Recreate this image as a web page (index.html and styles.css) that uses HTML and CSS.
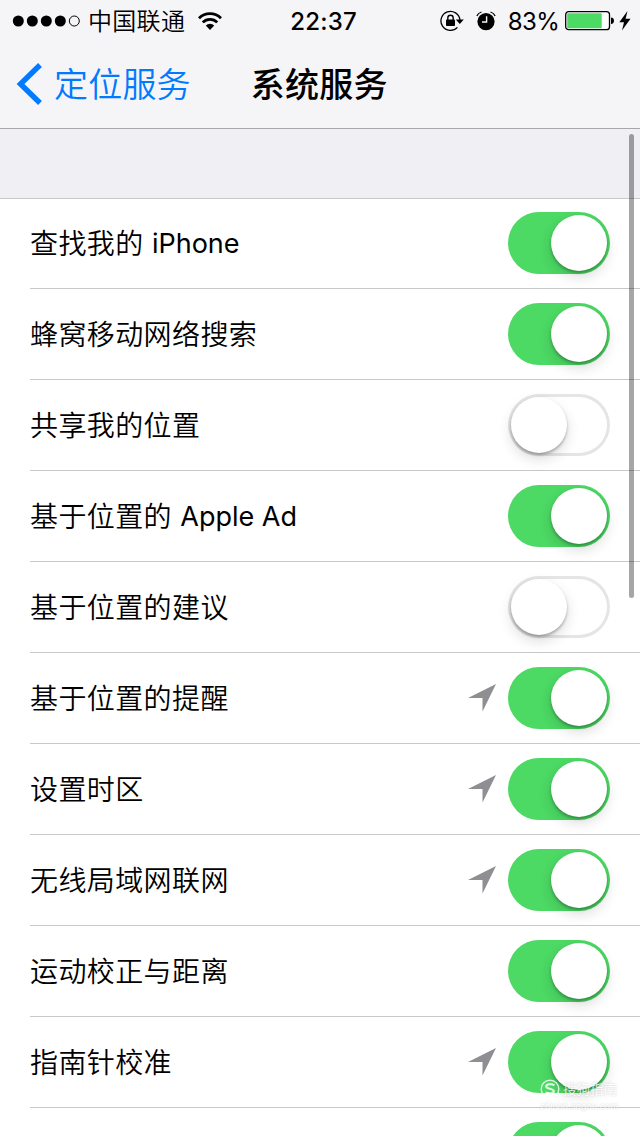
FILE: index.html
```html
<!DOCTYPE html>
<html lang="zh-CN">
<head>
  <meta charset="UTF-8" />
  <meta name="viewport" content="width=device-width, initial-scale=1" />
  <title>系统服务</title>
  <link rel="stylesheet" href="styles.css">
</head>
<body>
  <svg class="symbols" width="0" height="0">
    <symbol id="arrow" viewBox="0 0 28 28">
      <path d="M28 0 L14.5 27.5 V14 H0 Z" fill="#8e8e93" />
    </symbol>
  </svg>

  <header>
    <div class="status">
      <div class="status-left">
        <svg class="signal" width="70" height="14" viewBox="0 0 70 14">
          <circle cx="6.3" cy="7" r="5.5" /><circle cx="20.3" cy="7" r="5.5" />
          <circle cx="34.3" cy="7" r="5.5" /><circle cx="48.3" cy="7" r="5.5" />
          <circle cx="62.3" cy="7" r="5" fill="none" stroke="#000" />
        </svg>
        <span class="carrier">中国联通</span>
        <svg class="wifi" width="26" height="20" viewBox="0 0 26 20">
          <g fill="none" stroke="#000" stroke-width="2.8">
            <path d="M2 7.2 A15.5 15.5 0 0 1 24 7.2" />
            <path d="M5.8 11.4 A10 10 0 0 1 20.2 11.4" />
          </g>
          <path d="M8.8 14.5 A6 6 0 0 1 17.2 14.5 L13 19 Z" />
        </svg>
      </div>
      <span class="time">22:37</span>
      <div class="status-right">
        <svg class="lock" width="24" height="22" viewBox="0 0 24 22">
          <path d="M17.4 17.4 A9.5 9.5 0 1 1 19.9 10" fill="none" stroke="#000" stroke-width="1.3" />
          <path d="M15.8 9.6 H23.8 L19.8 14 Z" />
          <rect x="6" y="9.5" width="9" height="6.6" rx=".8" />
          <path d="M7.8 10 V8 A2.7 2.7 0 0 1 13.2 8 V10" fill="none" stroke="#000" stroke-width="1.4" />
        </svg>
        <svg class="alarm" width="20" height="20" viewBox="0 0 20 20">
          <circle cx="10" cy="10.6" r="8.6" />
          <path d="M.9 5.6 Q2 2.2 5.5 1.2 M14.5 1.2 Q18 2.2 19.1 5.6" fill="none" stroke="#f5f5f7" stroke-width="3" />
          <path d="M.9 5 Q2 2 5.5 1 M14.5 1 Q18 2 19.1 5" fill="none" stroke="#000" stroke-width="1.3" />
          <path d="M10.6 5.2 V11 H6" fill="none" stroke="#f5f5f7" stroke-width="1.4" />
        </svg>
        <span class="percent">83%</span>
        <svg class="battery" width="50" height="20" viewBox="0 0 50 20">
          <rect x=".7" y=".7" width="43.8" height="18" rx="3" fill="#fff" stroke="#000" stroke-width="1.3" />
          <rect x="2.2" y="2.2" width="34.5" height="15" rx="1" fill="#4cd964" />
          <path d="M46 6.4 Q49 6.6 49 9.7 T46 13 Z" />
        </svg>
        <svg class="bolt" width="12" height="20" viewBox="0 0 12 20">
          <path d="M8.5 0 L.3 11.2 H5 L3 19.4 L11.5 7.8 H6.6 Z" />
        </svg>
      </div>
    </div>
    <nav>
      <a class="back">
        <svg width="26" height="42" viewBox="0 0 26 42">
          <path d="M24 2 L4.5 21 L24 40" fill="none" stroke="#007aff" stroke-width="5.4" />
        </svg>
        <span>定位服务</span>
      </a>
      <h1>系统服务</h1>
    </nav>
  </header>

  <main>
    <ul class="list">
      <li><span class="label">查找我的 <span class="latin">iPhone</span></span><i class="switch on"></i></li>
      <li><span class="label">蜂窝移动网络搜索</span><i class="switch on"></i></li>
      <li><span class="label">共享我的位置</span><i class="switch"></i></li>
      <li><span class="label">基于位置的 <span class="latin">Apple Ad</span></span><i class="switch on"></i></li>
      <li><span class="label">基于位置的建议</span><i class="switch"></i></li>
      <li><span class="label">基于位置的提醒</span><svg class="arrow"><use href="#arrow" /></svg><i class="switch on"></i></li>
      <li><span class="label">设置时区</span><svg class="arrow"><use href="#arrow" /></svg><i class="switch on"></i></li>
      <li><span class="label">无线局域网联网</span><svg class="arrow"><use href="#arrow" /></svg><i class="switch on"></i></li>
      <li><span class="label">运动校正与距离</span><i class="switch on"></i></li>
      <li><span class="label">指南针校准</span><svg class="arrow"><use href="#arrow" /></svg><i class="switch on"></i></li>
      <li class="cut"><span class="label"></span><i class="switch on"></i></li>
    </ul>
  </main>

  <div class="scrollbar"></div>

  <div class="watermark">
    <div class="brand">
      <svg width="20" height="20" viewBox="0 0 20 20" fill="none" stroke="#fff">
        <circle cx="10" cy="10" r="8.8" stroke-width="1.4" />
        <path d="M14.5 6.2 C10 4.4 6 5.2 6.2 7.6 C6.5 10 13.6 9.4 13.8 12 C14 14.8 9.5 15 5.5 13.6" stroke-width="2.2" />
      </svg>
      <span>搜狗指南</span>
    </div>
    <small>zhinan.sogou.com</small>
  </div>
</body>
</html>
```

FILE: styles.css
```css
* {
  margin: 0;
  padding: 0;
  box-sizing: border-box;
}
:root {
  --bar: #f5f5f7;
  --group: #efeff4;
  --line: #c8c7cc;
  --blue: #007aff;
  --green: #4cd964;
}
body {
  position: relative;
  width: 640px;
  height: 1136px;
  overflow: hidden;
  background: var(--group);
  color: #000;
  font-family: Inter, "Noto Sans CJK SC", sans-serif;
}
.symbols {
  display: none;
}
svg {
  display: block;
  flex: none;
}
header {
  height: 129px;
  background: var(--bar);
  border-bottom: 1px solid #a7a7ab;
}
.status {
  display: grid;
  grid-template-columns: 1fr auto 1fr;
  align-items: center;
  height: 40px;
  padding: 0 10px 0 12px;
  font-size: 24px;
  line-height: 37px;
  white-space: nowrap;
}
.status-left,
.status-right {
  display: flex;
  align-items: center;
}
.status-right {
  justify-content: flex-end;
  margin-right: -1px;
}
.status span {
  padding-top: 3px;
}
.carrier {
  margin-left: 6px;
  font-weight: 350;
  letter-spacing: 0.3px;
}
.wifi {
  margin-left: 12px;
}
.time {
  margin-left: 5px;
  font-weight: 500;
  letter-spacing: 0.2px;
}
.alarm {
  margin-left: 12px;
}
.percent {
  margin-left: 12px;
  letter-spacing: -0.7px;
}
.battery {
  margin-left: 6px;
}
.bolt {
  margin-left: 4px;
}
.lock,
.alarm,
.battery,
.bolt,
.wifi,
.signal {
  margin-top: 1px;
}
nav {
  display: flex;
  align-items: center;
  height: 88px;
  padding-left: 16px;
}
.back {
  display: flex;
  align-items: center;
  gap: 12px;
  color: var(--blue);
  font-size: 34px;
  font-weight: 350;
  line-height: 50px;
}
.back span,
h1 {
  padding-top: 2px;
  letter-spacing: 0.2px;
}
h1 {
  margin-left: 60px;
  font-size: 34px;
  font-weight: 500;
  line-height: 50px;
}
main {
  height: 1007px;
  padding-top: 69px;
}
.list {
  list-style: none;
  background: #fff;
  border-top: 1px solid var(--line);
}
.list li {
  display: flex;
  align-items: center;
  height: 91px;
  margin-left: 30px;
  padding-right: 30px;
  border-bottom: 1px solid var(--line);
}
.list li:first-child {
  height: 90px;
  padding-bottom: 1px;
}
/* last row is only partly on screen */
.list .cut {
  align-items: flex-start;
  height: 28px;
  padding-top: 14px;
  border-bottom: 0;
  overflow: hidden;
}
.label {
  flex: 1;
  padding-bottom: 2px;
  font-size: 28px;
  font-weight: 350;
  letter-spacing: 0.4px;
}
.latin {
  font-size: 27px;
  font-weight: 400;
  letter-spacing: 0;
  vertical-align: 1px;
}
.arrow {
  width: 28px;
  height: 28px;
  margin-right: 12px;
}
.switch {
  display: flex;
  flex: none;
  justify-content: flex-start;
  width: 102px;
  height: 62px;
  padding: 3px;
  border-radius: 31px;
  background: #fff;
  box-shadow: inset 0 0 0 3px #e5e5e5;
}
.switch::after {
  content: "";
  width: 56px;
  height: 56px;
  border-radius: 50%;
  background: #fff;
  box-shadow: 0 6px 14px rgba(0, 0, 0, 0.14), 0 2px 3px rgba(0, 0, 0, 0.28);
}
.switch.on {
  justify-content: flex-end;
  background: var(--green);
  box-shadow: none;
}
.scrollbar {
  position: absolute;
  top: 134px;
  right: 6px;
  width: 5px;
  height: 464px;
  border-radius: 3px;
  background: rgba(0, 0, 0, 0.35);
}
.watermark {
  position: absolute;
  left: 540px;
  top: 1079px;
  color: #fff;
  opacity: 0.8;
  text-shadow: 0 0 2px rgba(0, 0, 0, 0.25);
}
.brand {
  display: flex;
  align-items: center;
  gap: 3px;
  font-size: 13.5px;
  line-height: 20px;
}
.watermark small {
  display: block;
  font-size: 9px;
  line-height: 14px;
}
```
